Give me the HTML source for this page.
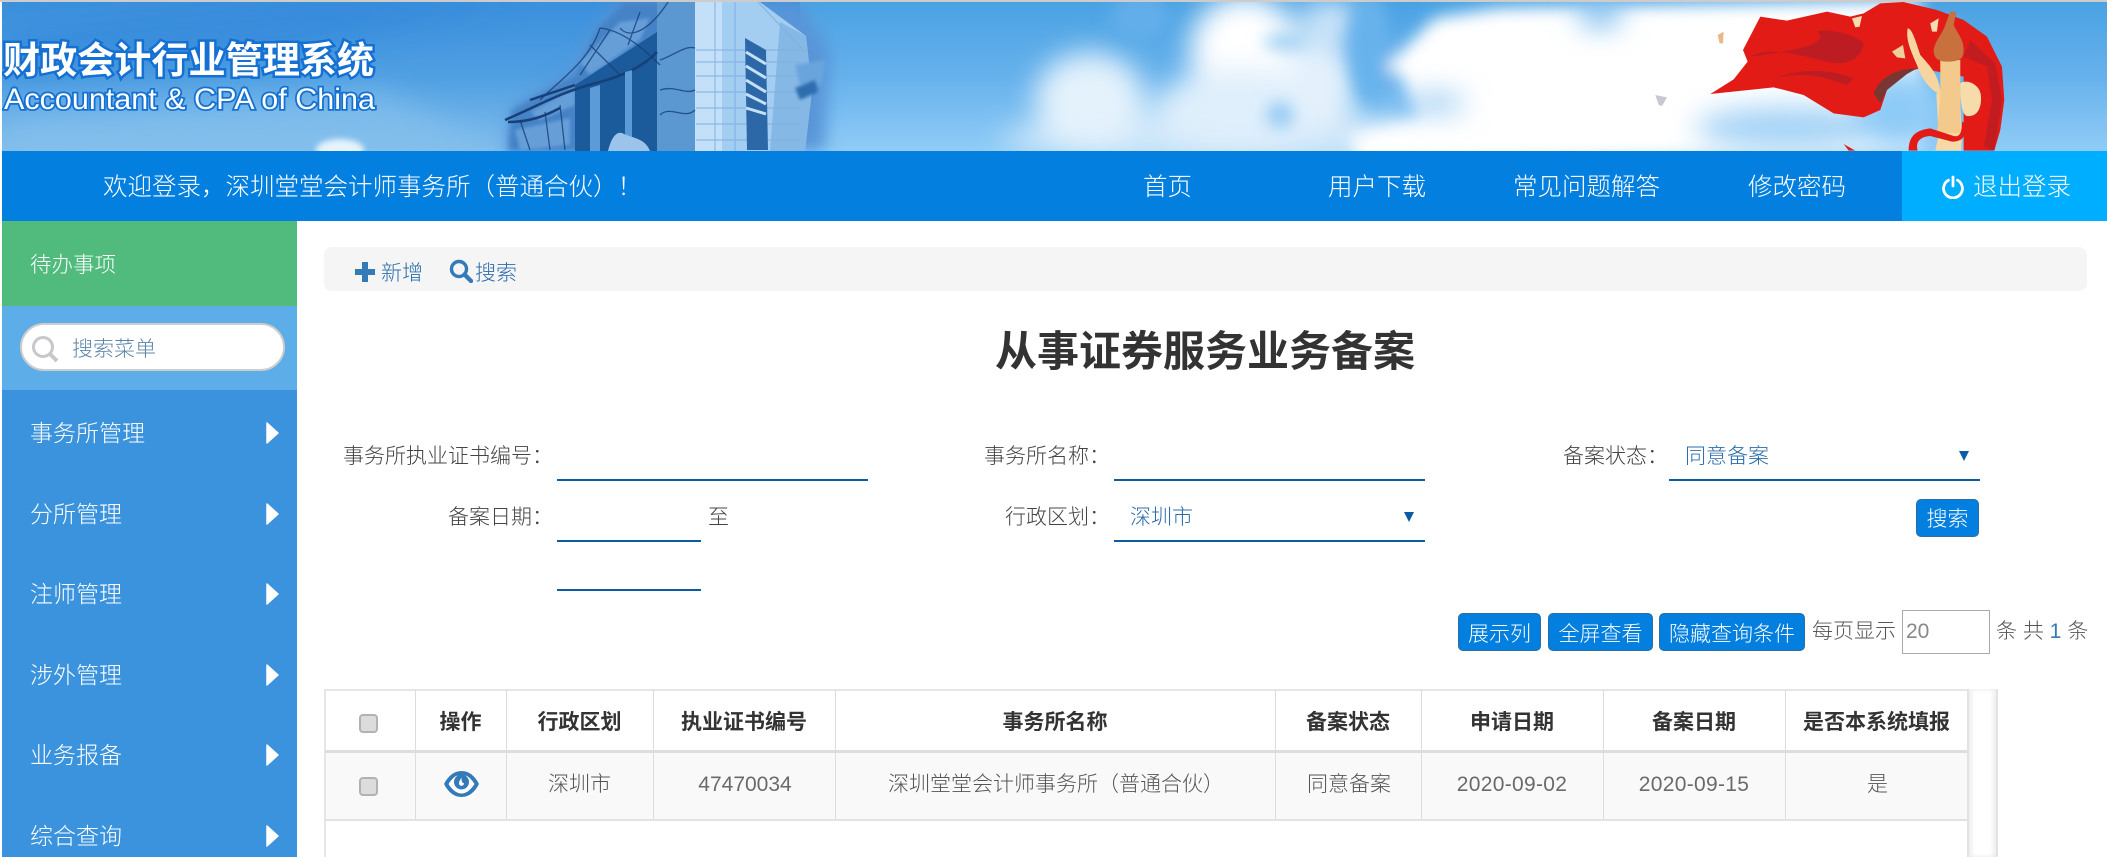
<!DOCTYPE html>
<html lang="zh">
<head>
<meta charset="utf-8">
<title>从事证券服务业务备案</title>
<style>
html,body{margin:0;padding:0;width:2107px;height:857px;overflow:hidden;background:#fff}
body{position:relative;font-family:"Liberation Sans","Noto Sans CJK SC",sans-serif;font-weight:300;color:#444}
.t{position:absolute;white-space:nowrap;line-height:30px;height:30px;font-size:21px}
.b{position:absolute}
.w{color:#fff}
.nav{font-size:24.5px;line-height:36px;height:36px;top:170px;color:#fff}
.m{font-size:23px;color:#fff;left:30px;line-height:34px;height:34px}
.ar{position:absolute;left:266px;width:13px;height:22px}
.l{position:absolute;background:#0d5ca3;height:2px}
.btn{position:absolute;background:#027fdf;border:1px solid #2e6da4;border-radius:5px;box-sizing:border-box;color:#fff;font-size:21px;text-align:center;line-height:41px;height:38px;top:613px;overflow:hidden}
.c{position:absolute;text-align:center;font-size:21px;line-height:30px;height:30px;white-space:nowrap}
.h{top:708px;font-weight:700;color:#333}
.d{top:770px;color:#555}
.n{color:#6a6a6a;font-size:21px}
.dt{letter-spacing:.3px}
.v{position:absolute;width:1px;background:#ddd}
.cb{position:absolute;left:359px;width:19px;height:19px;box-sizing:border-box;background:#dcdcdc;border:2px solid #b5b0b5;border-radius:4px}
.blue{color:#2b6ca9}
</style>
</head>
<body>
<svg class="b" style="left:0;top:0" width="2107" height="151" viewBox="0 0 2107 151">
<defs>
<linearGradient id="sky" x1="0" y1="0" x2="0" y2="1"><stop offset="0" stop-color="#3b8fdc"/><stop offset=".5" stop-color="#4f9fe2"/><stop offset="1" stop-color="#80bdec"/></linearGradient>
<linearGradient id="sky2" x1="0" y1="0" x2="0" y2="1"><stop offset="0" stop-color="#4aa2e3"/><stop offset=".5" stop-color="#66b1ec"/><stop offset="1" stop-color="#90ccf7"/></linearGradient>
<filter id="f2" x="-20%" y="-20%" width="140%" height="140%"><feGaussianBlur stdDeviation="1.500"/></filter>
<filter id="f3" x="-30%" y="-30%" width="160%" height="160%"><feGaussianBlur stdDeviation="3"/></filter>
<filter id="f8" x="-30%" y="-30%" width="160%" height="160%"><feGaussianBlur stdDeviation="8"/></filter>
<filter id="f14" x="-40%" y="-40%" width="180%" height="180%"><feGaussianBlur stdDeviation="14"/></filter>
<clipPath id="bn"><rect x="2" y="2" width="2105" height="149"/></clipPath>
</defs>
<rect width="2107" height="151" fill="#fff"/>
<rect width="2107" height="2" fill="#ccc"/>
<g clip-path="url(#bn)">
<rect x="2" y="2" width="2105" height="149" fill="url(#sky)"/>
<rect x="800" y="2" width="1307" height="149" fill="url(#sky2)"/>
<g filter="url(#f14)">
<path d="M2 30L300 2L520 2L300 50L2 80Z" fill="#2f85d8" opacity=".55"/>
<path d="M2 120L380 90L500 151L2 151Z" fill="#8cc4ef" opacity=".55"/>
</g>
<!-- small cloud -->
<ellipse cx="340" cy="150" rx="24" ry="11" fill="#e6f3fc" filter="url(#f3)"/>
<!-- clouds -->
<g filter="url(#f14)">
<ellipse cx="1240" cy="140" rx="240" ry="26" fill="#cde6f9"/>
<ellipse cx="1090" cy="100" rx="55" ry="48" fill="#e4f2fc"/>
<ellipse cx="1245" cy="50" rx="55" ry="55" fill="#fff"/>
<ellipse cx="1240" cy="110" rx="85" ry="42" fill="#dfeffc"/>
<ellipse cx="1320" cy="85" rx="38" ry="45" fill="#e4f1fc"/>
<ellipse cx="1330" cy="20" rx="30" ry="20" fill="#d5e9fa"/>
</g>
<g filter="url(#f8)">
<ellipse cx="1140" cy="18" rx="30" ry="24" fill="#62aeea"/>
<ellipse cx="1370" cy="50" rx="20" ry="55" fill="#68b2ec"/>
<ellipse cx="1280" cy="115" rx="14" ry="13" fill="#95cbf3"/>
<ellipse cx="1285" cy="42" rx="22" ry="8" fill="#9ccff3"/>
<path d="M1385 68L1435 18L1500 8L1920 0L1920 151L1360 165L1350 135L1420 118L1400 75Z" fill="#fff"/>
</g>
<g filter="url(#f14)">
<ellipse cx="1435" cy="103" rx="30" ry="9" fill="#8cc6f2"/>
<ellipse cx="1600" cy="12" rx="22" ry="16" fill="#7dbdee"/>
<ellipse cx="1790" cy="128" rx="95" ry="22" fill="#a4d3f6"/>
<ellipse cx="1900" cy="110" rx="45" ry="40" fill="#8ecbf7"/>
</g>
<rect x="1945" y="2" width="170" height="149" fill="url(#sky2)"/>
<!-- building -->
<g filter="url(#f8)"><path d="M505 151L512 108L570 70L600 22L622 2L800 2L830 50L825 151Z" fill="#5895d8"/></g>
<path d="M508 151L512 110L575 75L598 28L625 2L695 2L695 151Z" fill="#4482c6" filter="url(#f3)"/>
<g fill="#78aee2" opacity=".65" filter="url(#f2)">
<path d="M530 112L575 88L575 105L540 120Z"/><path d="M580 62L620 22L650 18L640 40L590 75Z"/><path d="M515 130L570 118L570 145L520 150Z"/>
</g>
<path d="M657 32L657 151L575 151L575 85Z" fill="#1b5a9b"/>
<path d="M657 2L695 2L695 151L657 151Z" fill="#5b97d0"/>
<path d="M695 2L760 2L806 36L812 90L805 151L696 151Z" fill="#a4cdf2"/>
<path d="M695 2L722 2L722 151L695 151Z" fill="#c4e0f9"/>
<path d="M780 22L806 36L812 90L805 151L770 151Z" fill="#86b8e6"/>
<g stroke="#7db0e0" stroke-width="1.200" opacity=".8"><path d="M696 50H800M696 62H800M696 76H800M696 92H800M696 108H800M696 124H800M696 140H800M715 2V151M735 2V151M758 2L805 52"/></g>
<path d="M745 38L766 50L768 150L747 150Z" fill="#2c68a8"/>
<g stroke="#c6e0f8" stroke-width="3"><path d="M746 52L766 64M746 66L766 78M746 80L766 92M746 94L766 104M746 108L766 114"/></g>
<path d="M795 65L825 60L822 85L800 85Z" fill="#6aa4dc" filter="url(#f2)"/>
<path d="M795 88L815 80L818 92L800 100Z" fill="#2f6dad" filter="url(#f2)"/>
<g stroke="#173f78" fill="none">
<path stroke-width="2.500" d="M505 120C540 105 560 92 600 82M508 122C530 122 545 116 560 108M657 52C640 70 615 78 600 82M575 85L530 100"/>
<path stroke-width="1.300" opacity=".8" d="M600 28C620 30 640 45 660 65M540 100C560 80 590 60 600 28M620 28C630 40 650 30 668 2M660 60C675 55 685 45 695 48M660 90C675 85 685 95 695 90M660 115C670 105 685 120 695 110M520 120L530 150M545 112L550 150M560 105L565 150M590 45L620 75M610 30L580 75M640 12L628 45"/>
</g>
<path d="M590 88L600 85L600 151L590 151ZM625 72L632 70L632 151L625 151Z" fill="#5c9ad8"/>
<path d="M608 151C612 135 618 130 624 134C632 138 645 138 650 151Z" fill="#9cc4ea"/>
<!-- flag -->
<g transform="translate(1587,0) scale(.3333)">
<path d="M370 282L440 238L482 185L468 150L520 50L600 62L720 35L790 50L830 40L880 10L950 6L1050 30L1130 60L1200 110L1245 200L1252 300L1240 390L1222 452L1130 452L1130 230L1000 205L960 215L900 270L880 330L830 352L740 340L650 285L560 262Z" fill="#e21b17"/>
<path d="M490 170C540 140 620 160 700 180C760 200 820 190 830 130C800 100 720 85 690 95C730 130 640 150 490 170Z" fill="#bd1c22"/>
<path d="M560 235C640 215 700 225 780 255L800 235C720 205 640 205 560 235Z" fill="#bd1c22"/>
<path d="M860 280C880 230 930 205 990 205L960 222L900 270L880 310Z" fill="#7a3632"/>
<path d="M1130 170L1200 200L1215 300L1190 440L1222 452L1245 300L1225 190L1150 120Z" fill="#bd1c22" opacity=".85"/>
<path d="M770 432L805 452L785 452Z" fill="#e21b17"/>
<path d="M1048 280L1118 280L1125 405L1122 452L1045 452L1055 405Z" fill="#f6d9a6"/>
<path d="M1060 180L1120 180L1120 400L1050 400L1060 290Z" fill="#f4c98c"/>
<path d="M1040 150C1045 120 1065 105 1075 75L1090 35L1108 35L1100 75C1115 105 1130 120 1130 150C1130 175 1120 185 1080 185C1055 185 1040 175 1040 150Z" fill="#c8713e"/>
<path d="M962 85C975 85 985 120 1000 165C1030 200 1055 220 1062 285C1030 270 1005 240 990 195C975 160 955 120 962 85Z" fill="#f6d5a0"/>
<path d="M1120 250C1140 235 1182 255 1182 290C1184 322 1172 352 1140 348C1125 345 1118 300 1120 250Z" fill="#f6dbab"/>
<path d="M965 452C965 410 985 390 1030 385L1100 408C1118 412 1125 400 1125 365L1137 372C1138 405 1130 425 1095 425L1030 408C1000 410 985 425 992 452Z" fill="#e21b17"/>
<path d="M795 55L825 48L818 80L805 82Z" fill="#f6dcb0"/>
<path d="M1030 70L1055 55L1050 95L1035 95Z" fill="#f6dcb0"/>
<path d="M915 155L948 135L955 175L930 172Z" fill="#f0cf9e"/>
<path d="M392 105L410 95L408 130L398 130Z" fill="#e8b888"/>
<path d="M205 285L240 292L225 318L215 315Z" fill="#c8c8d0"/>
</g>
<!-- logo -->
<text x="3" y="73" font-family="'Noto Sans CJK SC',sans-serif" font-weight="700" font-size="37" fill="#fff" stroke="#1470d2" stroke-width="5" paint-order="stroke" textLength="371" lengthAdjust="spacingAndGlyphs">财政会计行业管理系统</text>
<text x="4" y="109" font-family="'Liberation Sans',sans-serif" font-weight="400" font-size="30" fill="#fff" stroke="#1470d2" stroke-width="3.500" paint-order="stroke" textLength="371" lengthAdjust="spacingAndGlyphs">Accountant &amp; CPA of China</text>
</g>
</svg>

<!-- nav -->
<div class="b" style="left:2px;top:151px;width:2105px;height:70px;background:#027fdf"></div>
<div class="b" style="left:1902px;top:151px;width:205px;height:70px;background:#00aeff"></div>
<div class="t nav" style="left:103px">欢迎登录，深圳堂堂会计师事务所（普通合伙）！</div>
<div class="t nav" style="left:1143px">首页</div>
<div class="t nav" style="left:1328px">用户下载</div>
<div class="t nav" style="left:1513px">常见问题解答</div>
<div class="t nav" style="left:1748px">修改密码</div>
<svg class="b" style="left:1941px;top:175px" width="24" height="24" viewBox="0 0 24 24" fill="none" stroke="#fff" stroke-width="2.800" stroke-linecap="round"><path d="M7.500 5.200A9.400 9.400 0 1 0 16.500 5.200"/><path d="M12 2V11"/></svg>
<div class="t nav" style="left:1973px">退出登录</div>

<!-- sidebar -->
<div class="b" style="left:2px;top:221px;width:295px;height:85px;background:#50bb7d"></div>
<div class="b" style="left:2px;top:306px;width:295px;height:84px;background:#5dade9"></div>
<div class="b" style="left:2px;top:390px;width:295px;height:467px;background:#3a93dc"></div>
<div class="t w" style="left:30px;top:250px;font-size:21.5px">待办事项</div>
<div class="b" style="left:20px;top:323px;width:265px;height:48px;box-sizing:border-box;background:#fff;border:2px solid #ccc;border-radius:24px"></div>
<svg class="b" style="left:31px;top:335px" width="28" height="28" viewBox="0 0 28 28" fill="none" stroke="#c9c6cc"><circle cx="12" cy="12" r="9.500" stroke-width="3"/><path d="M19 19L26 26" stroke-width="4"/></svg>
<div class="t" style="left:72px;top:335px;color:#5d84a8">搜索菜单</div>
<div class="t m" style="top:416px">事务所管理</div>
<div class="t m" style="top:497px">分所管理</div>
<div class="t m" style="top:577px">注师管理</div>
<div class="t m" style="top:658px">涉外管理</div>
<div class="t m" style="top:738px">业务报备</div>
<div class="t m" style="top:819px">综合查询</div>
<svg class="ar" style="top:422px" viewBox="0 0 13 22"><path d="M1 1L12 11L1 21Z" fill="#fff" stroke="#fff" stroke-width="1.500" stroke-linejoin="round"/></svg>
<svg class="ar" style="top:503px" viewBox="0 0 13 22"><path d="M1 1L12 11L1 21Z" fill="#fff" stroke="#fff" stroke-width="1.500" stroke-linejoin="round"/></svg>
<svg class="ar" style="top:583px" viewBox="0 0 13 22"><path d="M1 1L12 11L1 21Z" fill="#fff" stroke="#fff" stroke-width="1.500" stroke-linejoin="round"/></svg>
<svg class="ar" style="top:664px" viewBox="0 0 13 22"><path d="M1 1L12 11L1 21Z" fill="#fff" stroke="#fff" stroke-width="1.500" stroke-linejoin="round"/></svg>
<svg class="ar" style="top:744px" viewBox="0 0 13 22"><path d="M1 1L12 11L1 21Z" fill="#fff" stroke="#fff" stroke-width="1.500" stroke-linejoin="round"/></svg>
<svg class="ar" style="top:825px" viewBox="0 0 13 22"><path d="M1 1L12 11L1 21Z" fill="#fff" stroke="#fff" stroke-width="1.500" stroke-linejoin="round"/></svg>

<!-- toolbar -->
<div class="b" style="left:324px;top:247px;width:1763px;height:44px;background:#f5f5f5;border-radius:8px"></div>
<svg class="b" style="left:354px;top:261px" width="22" height="22" viewBox="0 0 22 22"><path d="M8 1H14V8H21V14H14V21H8V14H1V8H8Z" fill="#337ab7"/></svg>
<div class="t blue" style="left:381px;top:259px">新增</div>
<svg class="b" style="left:449px;top:259px" width="24" height="24" viewBox="0 0 24 24" fill="none" stroke="#337ab7"><circle cx="10" cy="10" r="7.500" stroke-width="3.400"/><path d="M15.500 15.500L22 22" stroke-width="4.400" stroke-linecap="round"/></svg>
<div class="t blue" style="left:475px;top:259px">搜索</div>

<div class="t" style="left:995px;top:327px;font-size:42px;line-height:50px;height:50px;font-weight:700;color:#333">从事证券服务业务备案</div>

<!-- form -->
<div class="t" style="left:343px;top:442px">事务所执业证书编号：</div>
<div class="l" style="left:557px;top:479px;width:311px"></div>
<div class="t" style="left:984px;top:442px">事务所名称：</div>
<div class="l" style="left:1114px;top:479px;width:311px"></div>
<div class="t" style="left:1563px;top:442px">备案状态：</div>
<div class="t blue" style="left:1685px;top:442px">同意备案</div>
<div class="l" style="left:1669px;top:479px;width:311px"></div>
<svg class="b" style="left:1959px;top:451px" width="10" height="10"><path d="M0 0H10L5 10Z" fill="#0d5ca3"/></svg>

<div class="t" style="left:448px;top:503px">备案日期：</div>
<div class="l" style="left:557px;top:540px;width:144px"></div>
<div class="t" style="left:708px;top:503px">至</div>
<div class="l" style="left:557px;top:589px;width:144px"></div>
<div class="t" style="left:1005px;top:503px">行政区划：</div>
<div class="t blue" style="left:1130px;top:503px">深圳市</div>
<div class="l" style="left:1114px;top:540px;width:311px"></div>
<svg class="b" style="left:1404px;top:512px" width="10" height="10"><path d="M0 0H10L5 10Z" fill="#0d5ca3"/></svg>
<div class="btn" style="left:1916px;top:499px;width:63px;line-height:40px">搜索</div>

<!-- actions -->
<div class="btn" style="left:1458px;width:83px">展示列</div>
<div class="btn" style="left:1548px;width:105px">全屏查看</div>
<div class="btn" style="left:1659px;width:146px">隐藏查询条件</div>
<div class="t" style="left:1812px;top:617px;color:#555">每页显示</div>
<div class="b" style="left:1902px;top:610px;width:88px;height:44px;box-sizing:border-box;border:1px solid #aaa;background:#fff;color:#888;font-size:21px;line-height:42px;padding-left:3px">20</div>
<div class="t" style="left:1996px;top:617px;color:#555">条 共 <span style="color:#337ab7">1</span> 条</div>

<!-- table -->
<div class="b" style="left:325px;top:689px;width:1643px;height:2px;background:#e6e6e6"></div>
<div class="b" style="left:324px;top:689px;width:2px;height:168px;background:#e6e6e6"></div>
<div class="b" style="left:326px;top:753px;width:1642px;height:66px;background:#f9f9f9"></div>
<div class="b" style="left:325px;top:750px;width:1643px;height:3px;background:#ddd"></div>
<div class="b" style="left:325px;top:819px;width:1643px;height:2px;background:#e2e2e2"></div>
<div class="v" style="left:415px;top:690px;height:129px"></div>
<div class="v" style="left:506px;top:690px;height:129px"></div>
<div class="v" style="left:653px;top:690px;height:129px"></div>
<div class="v" style="left:835px;top:690px;height:129px"></div>
<div class="v" style="left:1275px;top:690px;height:129px"></div>
<div class="v" style="left:1421px;top:690px;height:129px"></div>
<div class="v" style="left:1603px;top:690px;height:129px"></div>
<div class="v" style="left:1785px;top:690px;height:129px"></div>
<div class="b" style="left:1967px;top:689px;width:2px;height:168px;background:#e2e2e2"></div>
<div class="b" style="left:1969px;top:689px;width:27px;height:168px;background:#fff;box-shadow:inset 3px 0 4px #eee,inset -3px 0 4px #eee"></div>
<div class="b" style="left:1996px;top:689px;width:2px;height:168px;background:#e2e2e2;border-radius:2px"></div>

<div class="cb" style="top:714px"></div>
<div class="c h" style="left:415px;width:91px">操作</div>
<div class="c h" style="left:506px;width:147px">行政区划</div>
<div class="c h" style="left:653px;width:182px">执业证书编号</div>
<div class="c h" style="left:835px;width:440px">事务所名称</div>
<div class="c h" style="left:1275px;width:146px">备案状态</div>
<div class="c h" style="left:1421px;width:182px">申请日期</div>
<div class="c h" style="left:1603px;width:182px">备案日期</div>
<div class="c h" style="left:1785px;width:183px">是否本系统填报</div>

<div class="cb" style="top:777px"></div>
<svg class="b" style="left:444px;top:771px" width="35" height="26" viewBox="0 0 35 26">
<path d="M0 13C4 5 10 0 17.500 0S31 5 35 13C31 21 25 26 17.500 26S4 21 0 13Z" fill="#337ab7"/>
<path d="M4.500 13C7 9 9.500 6.500 12 5C14.500 4 20.500 4 23 5C25.500 6.500 28 9 30.500 13C27 18.500 22.500 22.500 17.500 22.500S8 18.500 4.500 13Z" fill="#fff"/>
<circle cx="17.500" cy="11" r="7.500" fill="#337ab7"/>
<path d="M17.500 6.500C16 9 15 10.500 15 12.200C15 13.700 16.100 14.800 17.500 14.800C18.800 14.800 20 13.700 20 12.200C18.400 12.200 17.300 10.500 17.500 6.500Z" fill="#fff"/>
</svg>
<div class="c d" style="left:506px;width:147px">深圳市</div>
<div class="c d n" style="left:654px;width:182px">47470034</div>
<div class="c d" style="left:836px;width:440px">深圳堂堂会计师事务所（普通合伙）</div>
<div class="c d" style="left:1276px;width:146px">同意备案</div>
<div class="c d n dt" style="left:1421px;width:182px">2020-09-02</div>
<div class="c d n dt" style="left:1603px;width:182px">2020-09-15</div>
<div class="c d" style="left:1786px;width:183px">是</div>
</body>
</html>
